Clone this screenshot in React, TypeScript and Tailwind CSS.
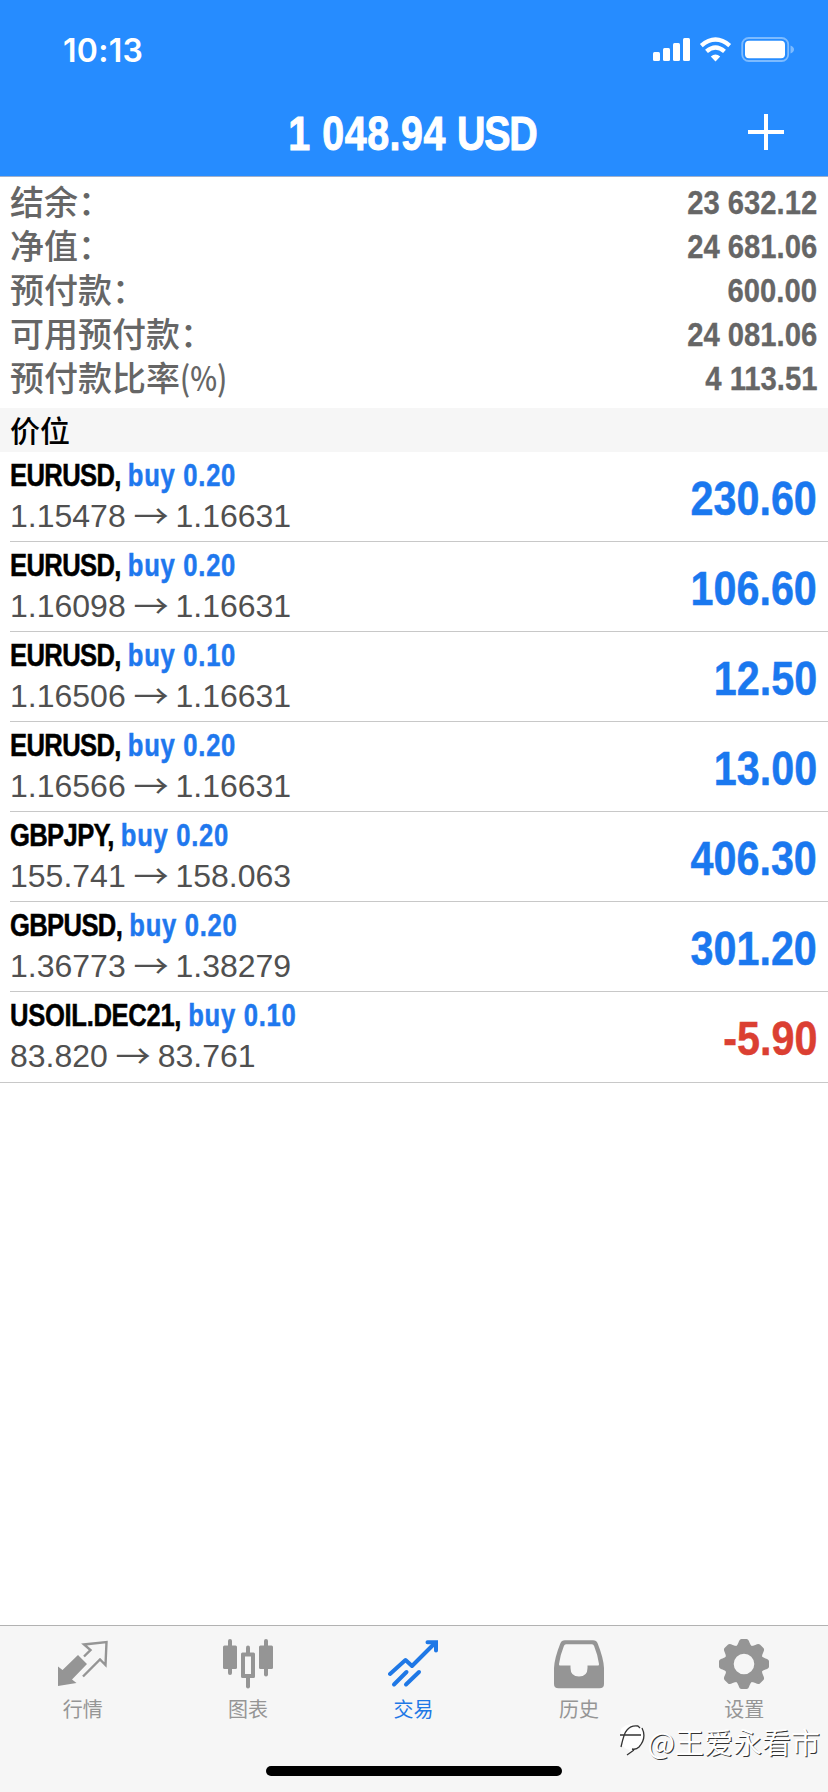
import React from 'react';

const summary = [
  { label: '结余：', value: '23 632.12' },
  { label: '净值：', value: '24 681.06' },
  { label: '预付款：', value: '600.00' },
  { label: '可用预付款：', value: '24 081.06' },
  { label: '预付款比率', unit: '(%)', value: '4 113.51' },
];

const positions = [
  { symbol: 'EURUSD', side: 'buy 0.20', open: '1.15478', current: '1.16631', profit: '230.60' },
  { symbol: 'EURUSD', side: 'buy 0.20', open: '1.16098', current: '1.16631', profit: '106.60' },
  { symbol: 'EURUSD', side: 'buy 0.10', open: '1.16506', current: '1.16631', profit: '12.50' },
  { symbol: 'EURUSD', side: 'buy 0.20', open: '1.16566', current: '1.16631', profit: '13.00' },
  { symbol: 'GBPJPY', side: 'buy 0.20', open: '155.741', current: '158.063', profit: '406.30' },
  { symbol: 'GBPUSD', side: 'buy 0.20', open: '1.36773', current: '1.38279', profit: '301.20' },
  { symbol: 'USOIL.DEC21', side: 'buy 0.10', open: '83.820', current: '83.761', profit: '-5.90' },
];

const QuotesIcon = () => (
  <svg width="50" height="50" viewBox="0 0 50 50" fill="none">
    <path d="M0 27.5 L4.5 31 L20 16 L29 25 L14 40.5 L18.5 44 L0 47 Z" fill="currentColor" />
    <path
      d="M26 17.5 L32.5 11 L26 5.5 L48.5 3 L47.5 26 L42 20.5 L25 37.5"
      stroke="currentColor"
      strokeWidth="2.4"
    />
  </svg>
);

const ChartIcon = () => (
  <svg width="50" height="50" viewBox="0 0 50 50" fill="currentColor">
    <rect x="5" y="0" width="4" height="36" rx="2" />
    <rect x="0" y="6.5" width="14" height="23.5" rx="1.5" />
    <rect x="41" y="0" width="4" height="37.5" rx="2" />
    <rect x="36" y="6.5" width="14" height="23.5" rx="1.5" />
    <rect x="23" y="6.5" width="4" height="9" rx="2" />
    <rect x="23" y="37" width="4" height="12.5" rx="2" />
    <path fillRule="evenodd" d="M19.5 13.5h11q1.5 0 1.5 1.5v22.5q0 1.5-1.5 1.5h-11q-1.5 0-1.5-1.5v-22.5q0-1.5 1.5-1.5z M22 17.5v17.5h6v-17.5z" />
  </svg>
);

const TradeIcon = () => (
  <svg width="50" height="50" viewBox="0 0 50 50" fill="none" stroke="currentColor" strokeWidth="4" strokeLinecap="round">
    <path d="M2 35 L17.5 21 L24 27 L46 5" strokeLinejoin="round" />
    <path d="M39.5 3.3 H48 V11.5" />
    <path d="M41 3 L48 3 L48 10 Z" fill="currentColor" stroke="none" />
    <path d="M18.5 33 L6 45.5 M31 33 L18 45.5" />
  </svg>
);

const HistoryIcon = () => (
  <svg width="50" height="50" viewBox="0 0 50 50" fill="currentColor">
    <path
      fillRule="evenodd"
      d="M11 1.2 H39 Q42.5 1.2 43.7 4.5 Q49.5 19 50 29 V45 Q50 49.3 45.5 49.3 H4.5 Q0 49.3 0 45 V29 Q.5 19 6.3 4.5 Q7.5 1.2 11 1.2 Z M12 5.2 Q10.5 5.2 9.9 7 Q6.2 16 5 25 Q4.8 26.5 6 26.5 H16.5 V29 Q16.5 37.5 25 37.5 Q33.5 37.5 33.5 29 V26.5 H44 Q45.2 26.5 45 25 Q43.8 16 40.1 7 Q39.5 5.2 38 5.2 Z"
    />
  </svg>
);

const SettingsIcon = () => (
  <svg width="50" height="50" viewBox="-25 -25 50 50" fill="currentColor">
    {[0, 45, 90, 135, 180, 225, 270, 315].map((angle) => (
      <path key={angle} transform={`rotate(${angle})`} d="M-8.5 -17 Q-6.5 -18.5 -5.5 -21.5 Q-4.5 -25 -2.5 -25 H2.5 Q4.5 -25 5.5 -21.5 Q6.5 -18.5 8.5 -17 Z" />
    ))}
    <path fillRule="evenodd" d="M0 -19.5 A19.5 19.5 0 1 1 0 19.5 A19.5 19.5 0 1 1 0 -19.5 Z M0 -10.3 A10.3 10.3 0 1 0 0 10.3 A10.3 10.3 0 1 0 0 -10.3 Z" />
  </svg>
);

const tabs = [
  { label: '行情', icon: QuotesIcon },
  { label: '图表', icon: ChartIcon },
  { label: '交易', icon: TradeIcon, active: true },
  { label: '历史', icon: HistoryIcon },
  { label: '设置', icon: SettingsIcon },
];

const StatusIcons = () => (
  <svg width="144" height="28" viewBox="0 0 144 28" fill="#fff">
    <rect x="1" y="15" width="7" height="9" rx="1.5" />
    <rect x="11" y="11" width="7" height="13" rx="1.5" />
    <rect x="21" y="6" width="7" height="18" rx="1.5" />
    <rect x="31" y="1" width="7" height="23" rx="1.5" />
    <g fill="none" stroke="#fff" strokeWidth="4.3">
      <path d="M49.3 8.6 Q63.5 -3.5 77.7 8.6" />
      <path d="M54.5 14.3 Q63.5 6.5 72.5 14.3" />
    </g>
    <path d="M58.8 19.5 Q63.5 15.5 68.2 19.5 L63.5 24.5 Z" />
    <rect x="90.2" y="1" width="46" height="23" rx="6.5" fill="none" stroke="#7dbbff" strokeWidth="1.8" />
    <rect x="93" y="3.7" width="40" height="17.6" rx="4" />
    <path d="M138.5 8.5 Q142 10 142 12.5 Q142 15 138.5 16.5 Z" fill="#7dbbff" />
  </svg>
);

export default function App() {
  return (
    <div className="relative flex h-[1792px] w-[828px] flex-col overflow-hidden bg-white font-['Liberation_Sans','Noto_Sans_CJK_SC',sans-serif]">
      <header className="flex h-[177px] shrink-0 flex-col border-b border-[#9fb0cc] bg-[#268cff] text-white">
        <div className="flex h-[88px] items-start justify-between pl-[63px] pr-[32px] pt-[37px]">
          <span className="mt-[-1px] font-['Inter',sans-serif] text-[32px] font-semibold leading-[30px] tracking-[0.3px]">10:13</span>
          <StatusIcons />
        </div>
        <div className="grid h-[88px] grid-cols-[1fr_auto_1fr] items-center">
          <span />
          <h1 className="mt-[3px] mr-[3px] scale-x-[0.82] whitespace-nowrap text-[48px] font-bold leading-[56px] [-webkit-text-stroke:1px]">
            <span className="tracking-[0.7px]">1 048.94</span> <span className="tracking-[-1.5px]">USD</span>
          </h1>
          <svg className="mr-[43px] mt-[-1px] justify-self-end" width="38" height="38" viewBox="0 0 38 38" stroke="#fff" strokeWidth="4">
            <path d="M19 1v36M1 19h36" />
          </svg>
        </div>
      </header>

      <section className="h-[231px] shrink-0 pl-[10px] pr-[11px] pt-[2px] text-[#666]">
        {summary.map((row) => (
          <div key={row.label} className="flex h-[44px] items-center justify-between">
            <span className="font-['Noto_Sans_CJK_SC',sans-serif] text-[34px] font-medium leading-[44px]">
              {row.label}
              {row.unit && <span className="inline-block origin-left scale-x-[0.84]">{row.unit}</span>}
            </span>
            <span className="mt-[1px] origin-right scale-x-[0.86] text-[34px] font-bold leading-[44px] [-webkit-text-stroke:0.3px]">{row.value}</span>
          </div>
        ))}
      </section>

      <div className="flex h-[44px] shrink-0 items-center bg-[#f6f6f6] pl-[10px] font-['Noto_Sans_CJK_SC',sans-serif] text-[30px] font-medium text-black">
        <span className="mt-[-3px] leading-[44px]">价位</span>
      </div>

      <ul className="shrink-0 border-b border-[#c8c8c8]">
        {positions.map((p, i) => (
          <li key={i} className="pl-[10px]">
            <div className={`flex h-[90px] items-center justify-between pr-[11px] ${i < positions.length - 1 ? 'border-b border-[#c8c8c8]' : ''}`}>
              <div className="mt-[-2px]">
                <div className="origin-left scale-x-[0.8] whitespace-nowrap text-[32px] font-bold leading-[41px] [-webkit-text-stroke:0.5px]">
                  <span className={`text-black ${p.symbol.length > 6 ? 'tracking-[-0.4px]' : 'tracking-[-0.8px]'}`}>{p.symbol},</span>{' '}
                  <span className="tracking-[0.9px] text-[#1f78ee]">{p.side}</span>
                </div>
                <div className="whitespace-nowrap text-[32px] leading-[41px] text-[#505050]">
                  {p.open}{' '}
                  <span className="relative top-[1px] inline-block scale-x-110 font-['Noto_Sans_CJK_SC',sans-serif] font-normal leading-none">→</span>{' '}
                  {p.current}
                </div>
              </div>
              <span className={`mt-[4px] origin-right scale-x-[0.86] text-[48px] font-bold leading-[56px] [-webkit-text-stroke:0.5px] ${p.profit.startsWith('-') ? 'text-[#db3f32]' : 'text-[#1a78ef]'}`}>
                {p.profit}
              </span>
            </div>
          </li>
        ))}
      </ul>

      <nav className="mt-auto flex h-[167px] shrink-0 flex-col justify-between border-t border-[#b2b2b2] bg-[#f6f6f6] pb-[16px]">
        <div className="mr-[1px] grid grid-cols-5 pt-[13px]">
          {tabs.map(({ label, icon: Icon, active }) => (
            <div key={label} className={`flex flex-col items-center ${active ? 'text-[#1f78e6]' : 'text-[#959595]'}`}>
              <Icon />
              <span className="mt-[6px] font-['Noto_Sans_CJK_SC',sans-serif] text-[20px] leading-[28px]">{label}</span>
            </div>
          ))}
        </div>
        <div className="h-[10px] w-[296px] self-center rounded-full bg-black" />
      </nav>

      <div className="absolute right-[8px] top-[1722px] flex items-center gap-[3px] font-['Noto_Sans_CJK_SC',sans-serif] text-[29px] leading-[38px] text-white [text-shadow:1px_1px_0.5px_#333]">
        <svg width="26" height="34" viewBox="-1 0 26 34" fill="none">
          <path d="M1 5 Q4 1 12 0 Q24 2 24 13 Q22 24 13 27 L7 32 L10 26 Q0 24 0 14 Z" fill="#fff" />
          <path d="M1 23 Q4 9 7 6 Q11 1 18 2 L20 4 M0 11 H21 M22 4 Q27 14 19 23 Q16 26 12 25 M14 26 L7 31" stroke="#333" strokeWidth="1.3" />
        </svg>
        <span>@王爱永看市</span>
      </div>
    </div>
  );
}
